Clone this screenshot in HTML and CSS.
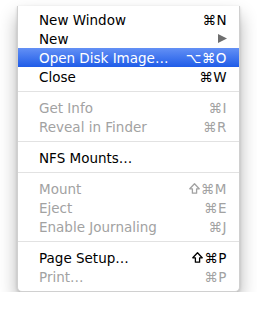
FILE: index.html
```html
<!DOCTYPE html>
<html lang="en">
<head>
    <meta charset="UTF-8">
    <title>File menu</title>
    <link rel="stylesheet" href="styles.css">
</head>
<body>
    <!-- menu deroulant Fichier -->
    <ul class="menu">
        <li class="item"><span class="label">New Window</span><span class="key">⌘N</span></li>
        <li class="item"><span class="label">New</span>
            <svg class="arrow" width="9" height="9" viewBox="0 0 9 9"><polygon points="0,0 9,4.5 0,9" /></svg>
        </li>
        <li class="item selected"><span class="label">Open Disk Image…</span><span class="key">⌥⌘O</span></li>
        <li class="item"><span class="label">Close</span><span class="key">⌘W</span></li>
        <li class="sep"></li>
        <li class="item off"><span class="label">Get Info</span><span class="key">⌘I</span></li>
        <li class="item off"><span class="label">Reveal in Finder</span><span class="key">⌘R</span></li>
        <li class="sep"></li>
        <li class="item"><span class="label">NFS Mounts…</span></li>
        <li class="sep"></li>
        <li class="item off"><span class="label">Mount</span>
            <span class="key"><svg class="shift" width="11" height="11" viewBox="0 0 11 11"><polygon points="5.5,0.8 10.2,5.8 7.6,5.8 7.6,10.2 3.4,10.2 3.4,5.8 0.8,5.8" /></svg>⌘M</span>
        </li>
        <li class="item off"><span class="label">Eject</span><span class="key">⌘E</span></li>
        <li class="item off"><span class="label">Enable Journaling</span><span class="key">⌘J</span></li>
        <li class="sep"></li>
        <li class="item"><span class="label">Page Setup…</span>
            <span class="key"><svg class="shift" width="11" height="11" viewBox="0 0 11 11"><polygon points="5.5,0.8 10.2,5.8 7.6,5.8 7.6,10.2 3.4,10.2 3.4,5.8 0.8,5.8" /></svg>⌘P</span>
        </li>
        <li class="item off"><span class="label">Print…</span><span class="key">⌘P</span></li>
    </ul>
</body>
</html>
```

FILE: styles.css
```css
body {
    margin: 0;
    background: #fff;
    font-family: "DejaVu Sans", "Liberation Sans", sans-serif;
}

/* boite du menu */
.menu {
    list-style: none;
    box-sizing: border-box;
    width: 223px;
    margin: 6px 0 0 17px;
    padding: 4px 0 5px 0;
    background: #fff;
    border: 1px solid #d0d0d0;
    border-top: none;
    border-radius: 0 0 5px 5px;
    box-shadow: 0 1px 3px rgba(0, 0, 0, 0.15), 0 10px 18px rgba(0, 0, 0, 0.3);
}

.item {
    display: flex;
    align-items: center;
    justify-content: space-between;
    height: 19px;
    padding: 0 12px 0 21px;
    font-size: 13.5px;
    color: #000;
}

.item.off {
    color: #a2a2a2;
}

.item.selected {
    background: linear-gradient(#6390f5, #1f5ce8);
    color: #fff;
}

.key {
    display: flex;
    align-items: center;
    letter-spacing: 0.5px;
}

.shift {
    fill: none;
    stroke: currentColor;
    stroke-width: 1.3;
    stroke-linejoin: round;
    margin-right: 1px;
}

.arrow {
    fill: #6e6e6e;
}

/* ligne de separation */
.sep {
    height: 12px;
    box-sizing: border-box;
    border-bottom: 6px solid transparent;
    background: linear-gradient(#e2e2e2, #e2e2e2) no-repeat 0 5px / 100% 1px;
}
```
